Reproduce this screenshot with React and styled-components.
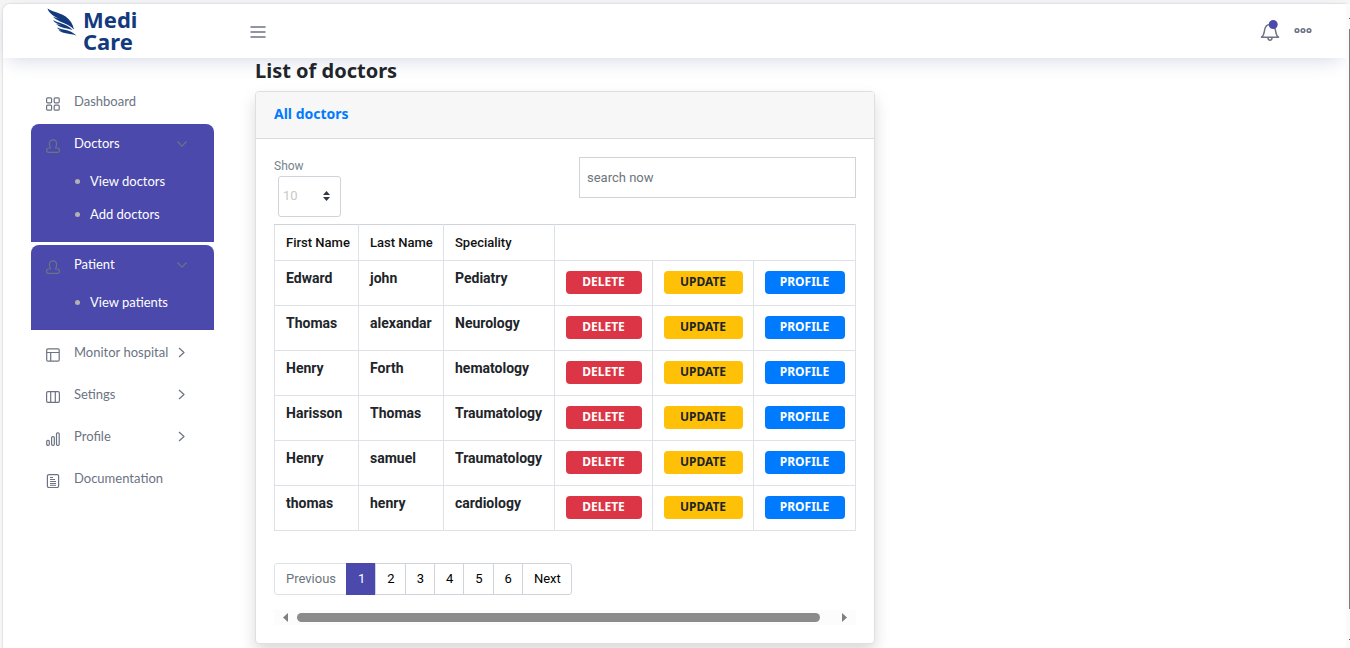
import React from "react";
import styled, { createGlobalStyle } from "styled-components";

const purple = "#4b49ac";
const slate = "#6c7383";
const heading = '"Noto Sans", "Open Sans", sans-serif';

const GlobalStyle = createGlobalStyle`
  *, *::before, *::after { box-sizing: border-box; }
  body {
    margin: 0;
    overflow: hidden;
    background: #f6f6f6;
    color: #212529;
    font-family: Roboto, sans-serif;
  }
  button, input, select { font-family: inherit; margin: 0; }
  h1, h2, ul, ol { margin: 0; padding: 0; }
  ul, ol { list-style: none; }
  a { color: inherit; text-decoration: none; }
  svg { flex-shrink: 0; }
`;

const Page = styled.div`
  min-height: 100vh;
  padding: 4px 0 0 3px;
  display: flex;
`;

const Frame = styled.div`
  flex: 1;
  min-width: 0;
  background: #fff;
  border-top-left-radius: 7px;
  box-shadow: 0 0 2px rgba(0, 0, 0, 0.25);
`;

const PageScroll = styled.div`
  width: 4px;
  padding: 14px 0 8px;
  display: flex;
  flex-direction: column;
  align-items: flex-end;
  justify-content: space-between;
  background: #fafafa;
`;

const ScrollTick = styled.span`
  width: 1px;
  height: 1px;
  background: #555;
`;

const ScrollThumb = styled.span`
  width: 1px;
  flex: 1;
  margin: 10px 0 30px;
  background: #7d7d7d;
`;

const Navbar = styled.header`
  height: 54px;
  padding: 0 34px 0 44px;
  display: flex;
  align-items: center;
  background: #fff;
  border-top-left-radius: 7px;
  box-shadow: 0 5px 21px -5px #cdd1e1;
`;

const Brand = styled.a`
  width: 203px;
  padding-bottom: 2px;
  display: flex;
  align-items: flex-start;
  gap: 5px;
  color: #123a7c;
  font: 700 22px/22px ${heading};
`;

const BrandName = styled.span`
  width: min-content;
`;

const IconButton = styled.button`
  padding: 0;
  border: 0;
  background: none;
  color: ${slate};
  display: flex;
  cursor: pointer;
`;

const NavActions = styled.div`
  margin-left: auto;
  display: flex;
  align-items: center;
  gap: 14px;
`;

const Body = styled.div`
  display: flex;
`;

const Sidebar = styled.nav`
  width: 252px;
  flex-shrink: 0;
  padding: 24px 41px 0 28px;
`;

const Menu = styled.ul`
  display: flex;
  flex-direction: column;
  gap: 3px;
`;

const MenuItem = styled.li`
  border-radius: 8px 8px 0 0;
  background: ${(p) => (p.$open ? purple : "transparent")};
  color: ${(p) => (p.$open ? "#fff" : slate)};
  font: 13px/18px Lato, sans-serif;
`;

const MenuLink = styled.a`
  height: 39px;
  padding: 0 24px 0 15px;
  display: flex;
  align-items: center;
`;

const MenuIcon = styled.span`
  width: 28px;
  padding-top: 4px;
  display: flex;
  color: ${slate};
`;

const MenuLabel = styled.span`
  flex: 1;
  padding-bottom: 2px;
  white-space: nowrap;
`;

const SubMenu = styled.ul`
  padding: 1px 0 12px 44px;
`;

const SubItem = styled.li`
  height: 33px;
  display: flex;
  align-items: center;
  gap: 10px;
  &::before {
    content: "";
    width: 5px;
    height: 5px;
    margin-top: 2px;
    border-radius: 50%;
    background: #b2b2b2;
  }
`;

const Content = styled.main`
  flex: 1;
  min-width: 0;
  padding: 1px 24px 0 0;
`;

const Title = styled.h1`
  margin-bottom: 8px;
  position: relative;
  font: 700 20px/24px ${heading};
`;

const Card = styled.section`
  max-width: 620px;
  border: 1px solid #dfdfdf;
  border-radius: 4px;
  background: #fff;
  box-shadow: 0 8px 16px rgba(0, 0, 0, 0.15);
`;

const CardHeader = styled.header`
  height: 47px;
  padding: 0 18px 2px;
  display: flex;
  align-items: center;
  background: #f7f7f7;
  border-bottom: 1px solid #dadada;
  border-radius: 3px 3px 0 0;
`;

const CardTitle = styled.h2`
  color: #007bff;
  font: 700 14px/20px ${heading};
`;

const CardBody = styled.div`
  padding: 18px;
`;

const Toolbar = styled.div`
  margin-bottom: 7px;
  display: flex;
  justify-content: space-between;
  align-items: flex-start;
`;

const LengthLabel = styled.label`
  display: flex;
  flex-direction: column;
  color: #76838f;
  font-size: 12px;
  line-height: 19px;
`;

const SelectBox = styled.span`
  width: 63px;
  margin: 0 4px;
  position: relative;
  svg {
    position: absolute;
    right: 11px;
    top: 15px;
    pointer-events: none;
  }
`;

const Select = styled.select`
  width: 100%;
  height: 41px;
  padding: 0 4px 2px;
  display: block;
  appearance: none;
  border: 1px solid #ced4da;
  border-radius: 3px;
  background: #fff;
  color: #c9c8c8;
  font-size: 13px;
`;

const Search = styled.input`
  width: 277px;
  height: 41px;
  padding: 0 7px;
  border: 1px solid #ced4da;
  border-radius: 0;
  font-size: 13px;
  &::placeholder { color: #6c757d; opacity: 1; }
`;

const Table = styled.table`
  width: 100%;
  table-layout: fixed;
  border-collapse: collapse;
  border: 1px solid #dee2e6;
  border-top-color: #ced4da;
`;

const Th = styled.th`
  height: 36px;
  padding: 0 0 1px 11px;
  border: 1px solid #dee2e6;
  border-top-color: #ced4da;
  text-align: left;
  font-size: 13px;
  font-weight: 500;
  color: #111;
`;

const Td = styled.td`
  height: 45px;
  padding: ${(p) => (p.$action ? "10px 10px 0 11px" : "8px 0 0 11px")};
  border: 1px solid #dee2e6;
  vertical-align: top;
  font-size: 14px;
  line-height: 18px;
  font-weight: 700;
`;

const tones = {
  danger: ["#dc3545", "#fff"],
  warning: ["#ffc107", "#212529"],
  primary: ["#007bff", "#fff"],
};

const ActionButton = styled.button`
  width: 100%;
  height: 23px;
  padding: 0 1px 2px 0;
  display: block;
  border: 0;
  border-radius: 4px;
  background: ${(p) => tones[p.$tone][0]};
  color: ${(p) => tones[p.$tone][1]};
  font: 700 12px/20px ${heading};
  cursor: pointer;
`;

const Pagination = styled.ul`
  margin-top: 32px;
  display: flex;
`;

const PageButton = styled.button`
  height: 32px;
  padding: 0 10px 2px 11px;
  margin-left: -1px;
  display: block;
  border: 1px solid ${(p) => (p.$active ? purple : "#ced4da")};
  background: ${(p) => (p.$active ? purple : "#fff")};
  color: ${(p) => (p.$active ? "#fff" : "#000")};
  font-size: 13px;
  li:first-child > & {
    margin-left: 0;
    border-color: #dee2e6;
    border-radius: 3px 0 0 3px;
    color: #6c757d;
  }
  li:last-child > & { border-radius: 0 3px 3px 0; }
`;

const TableScroll = styled.div`
  height: 15px;
  margin-top: 15px;
  padding: 0 8px;
  display: flex;
  align-items: center;
  background: #fcfcfc;
`;

const TableThumb = styled.span`
  flex: 1;
  height: 9px;
  margin: 0 21px 0 8px;
  border-radius: 5px;
  background: #8b8b8b;
`;

function Icon({ children, w = 14, h = 14, stroke = 1.2 }) {
  return (
    <svg width={w} height={h} viewBox={`0 0 ${w} ${h}`} fill="none" stroke="currentColor"
      strokeWidth={stroke} strokeLinejoin="round" aria-hidden="true">
      {children}
    </svg>
  );
}

const icons = {
  grid: (
    <Icon>
      <rect x="0.6" y="0.8" width="5" height="5" rx="1" />
      <rect x="8.2" y="0.8" width="5" height="5" rx="1" />
      <rect x="0.6" y="8.2" width="5" height="5" rx="1" />
      <rect x="8.2" y="8.2" width="5" height="5" rx="1" />
    </Icon>
  ),
  head: (
    <Icon>
      <path d="M4.6 9C3.7 7.600 3.400 6.200 3.400 4.800C3.400 2.400 4.800 0.800 7 0.800S10.600 2.400 10.600 4.800C10.600 6.200 10.300 7.600 9.400 9H11C12.700 9 13.400 10 13.400 11.200C13.400 12.500 12.700 13.300 11.400 13.300H2.600C1.300 13.300 0.600 12.500 0.600 11.200C0.600 10 1.300 9 3 9Z" />
    </Icon>
  ),
  layout: (
    <Icon>
      <rect x="0.7" y="0.8" width="12.500" height="12.400" rx="1.200" />
      <path d="M1 4.500H13M4.700 4.500V13" />
    </Icon>
  ),
  columns: (
    <Icon>
      <rect x="0.600" y="1.700" width="12.800" height="10.600" rx="1.400" />
      <path d="M4.700 2V12M9.300 2V12" />
    </Icon>
  ),
  bars: (
    <Icon>
      <rect x="0.700" y="8.300" width="2.600" height="5" rx="1.100" />
      <rect x="5.600" y="4.700" width="2.700" height="8.600" rx="1.100" />
      <rect x="10.500" y="0.800" width="2.700" height="12.500" rx="1.100" />
    </Icon>
  ),
  paper: (
    <Icon>
      <rect x="1.400" y="0.600" width="11.200" height="12.900" rx="1.400" />
      <path d="M4 3.500H7M4 5.500H9M4 7.500H10M4 9.500H10M4 11.300H10" strokeWidth="1" />
    </Icon>
  ),
};

const menu = [
  { label: "Dashboard", icon: "grid" },
  { label: "Doctors", icon: "head", children: ["View doctors", "Add doctors"] },
  { label: "Patient", icon: "head", children: ["View patients"] },
  { label: "Monitor hospital", icon: "layout", more: true },
  { label: "Setings", icon: "columns", more: true },
  { label: "Profile", icon: "bars", more: true },
  { label: "Documentation", icon: "paper" },
];

const doctors = [
  ["Edward", "john", "Pediatry"],
  ["Thomas", "alexandar", "Neurology"],
  ["Henry", "Forth", "hematology"],
  ["Harisson", "Thomas", "Traumatology"],
  ["Henry", "samuel", "Traumatology"],
  ["thomas", "henry", "cardiology"],
];

const columnWidths = [84, 85, 111, 98, 101, 102];
const actions = [["DELETE", "danger"], ["UPDATE", "warning"], ["PROFILE", "primary"]];
const pages = ["Previous", "1", "2", "3", "4", "5", "6", "Next"];

function Wing() {
  return (
    <svg width="31" height="29" viewBox="0 0 31 29" fill="#123a7c" aria-hidden="true">
      <path d="M.5.5C7 5 18 4.500 24 14C25.500 16.500 26.500 19 27 21.600C23.500 17.500 19 15.600 13 13.400C10 12.200 7.500 10.500 6 8.600C8 9.600 10 10.200 12.500 10.700C9 9.500 6 8 4 5.800C2.300 4.300 1 2.500.5.5Z" />
      <path d="M6 12C11 15 19.500 15.500 25.500 22C22 20.700 18 20.400 14 19C11.500 18 10 17 9 15.800C10.500 16.600 12.500 17 14.500 17.300C11 16.400 7.500 14.800 6 12Z" />
      <path d="M10 19.500C15 22 22.500 21 29.500 27.500C25 25.800 20 26 15.500 24.500C13.500 23.700 12 22.800 11.500 21.800C13 22.600 15 22.900 16.500 23C13.500 22.300 11 21.500 10 19.500Z" />
    </svg>
  );
}

export default function App() {
  return (
    <>
      <GlobalStyle />
      <Page>
        <Frame>
          <Navbar>
            <Brand href="#">
              <Wing />
              <BrandName>Medi Care</BrandName>
            </Brand>
            <IconButton type="button" aria-label="Toggle menu">
              <Icon w={16} h={16} stroke={1.4}>
                <path d="M0.500 4H15.500M0.500 9H15.500M0.500 14H15.500" />
              </Icon>
            </IconButton>
            <NavActions>
              <IconButton type="button" aria-label="Notifications">
                <Icon w={20} h={23} stroke={1.5}>
                  <path d="M1.500 17.200C4 15.500 4.100 13 4.600 10C5.200 6.500 6.800 4.500 10 4.500S14.800 6.500 15.400 10C15.900 13 16 15.500 18.500 17.200ZM8 17.800C8 21 12 21 12 17.800" />
                  <circle cx="13.200" cy="4.500" r="4.500" fill={purple} stroke="none" />
                </Icon>
              </IconButton>
              <IconButton type="button" aria-label="More options">
                <Icon w={18} h={10} stroke={1.600}>
                  <circle cx="3" cy="4.500" r="1.800" />
                  <circle cx="9" cy="4.500" r="1.800" />
                  <circle cx="15" cy="4.500" r="1.800" />
                </Icon>
              </IconButton>
            </NavActions>
          </Navbar>
          <Body>
            <Sidebar>
              <Menu>
                {menu.map((item) => (
                  <MenuItem key={item.label} $open={!!item.children}>
                    <MenuLink href="#">
                      <MenuIcon>{icons[item.icon]}</MenuIcon>
                      <MenuLabel>{item.label}</MenuLabel>
                      {item.children && (
                        <Icon w={16} h={10}><path d="M3.500 2.500L8 7.200L12.500 2.500" stroke={slate} /></Icon>
                      )}
                      {item.more && (
                        <Icon w={16} h={14}><path d="M5 2L10 6.500L5 11" /></Icon>
                      )}
                    </MenuLink>
                    {item.children && (
                      <SubMenu>
                        {item.children.map((name) => (
                          <SubItem key={name}><a href="#">{name}</a></SubItem>
                        ))}
                      </SubMenu>
                    )}
                  </MenuItem>
                ))}
              </Menu>
            </Sidebar>
            <Content>
              <Title>List of doctors</Title>
              <Card>
                <CardHeader><CardTitle>All doctors</CardTitle></CardHeader>
                <CardBody>
                  <Toolbar>
                    <LengthLabel>
                      Show
                      <SelectBox>
                        <Select defaultValue="10">
                          <option>10</option>
                          <option>25</option>
                          <option>50</option>
                        </Select>
                        <svg width="7" height="10" viewBox="0 0 7 10" fill="#343a40" aria-hidden="true">
                          <path d="M0 4L3.500 0L7 4ZM0 6L3.500 10L7 6Z" />
                        </svg>
                      </SelectBox>
                    </LengthLabel>
                    <Search type="search" placeholder="search now" aria-label="Search doctors" />
                  </Toolbar>
                  <Table>
                    <colgroup>
                      {columnWidths.map((w, i) => <col key={i} width={w} />)}
                    </colgroup>
                    <thead>
                      <tr>
                        <Th>First Name</Th>
                        <Th>Last Name</Th>
                        <Th>Speciality</Th>
                        <Th colSpan={3} aria-label="Actions" />
                      </tr>
                    </thead>
                    <tbody>
                      {doctors.map((row, i) => (
                        <tr key={i}>
                          {row.map((value, j) => <Td key={j}>{value}</Td>)}
                          {actions.map(([label, tone]) => (
                            <Td key={label} $action>
                              <ActionButton type="button" $tone={tone}>{label}</ActionButton>
                            </Td>
                          ))}
                        </tr>
                      ))}
                    </tbody>
                  </Table>
                  <Pagination>
                    {pages.map((label) => (
                      <li key={label}>
                        <PageButton type="button" $active={label === "1"}>{label}</PageButton>
                      </li>
                    ))}
                  </Pagination>
                  <TableScroll aria-hidden="true">
                    <svg width="7" height="9" viewBox="0 0 7 9" fill="#7f7f7f"><path d="M6 0V9L1 4.500Z" /></svg>
                    <TableThumb />
                    <svg width="7" height="9" viewBox="0 0 7 9" fill="#7f7f7f"><path d="M1 0V9L6 4.500Z" /></svg>
                  </TableScroll>
                </CardBody>
              </Card>
            </Content>
          </Body>
        </Frame>
        <PageScroll aria-hidden="true">
          <ScrollTick />
          <ScrollThumb />
          <ScrollTick />
        </PageScroll>
      </Page>
    </>
  );
}
